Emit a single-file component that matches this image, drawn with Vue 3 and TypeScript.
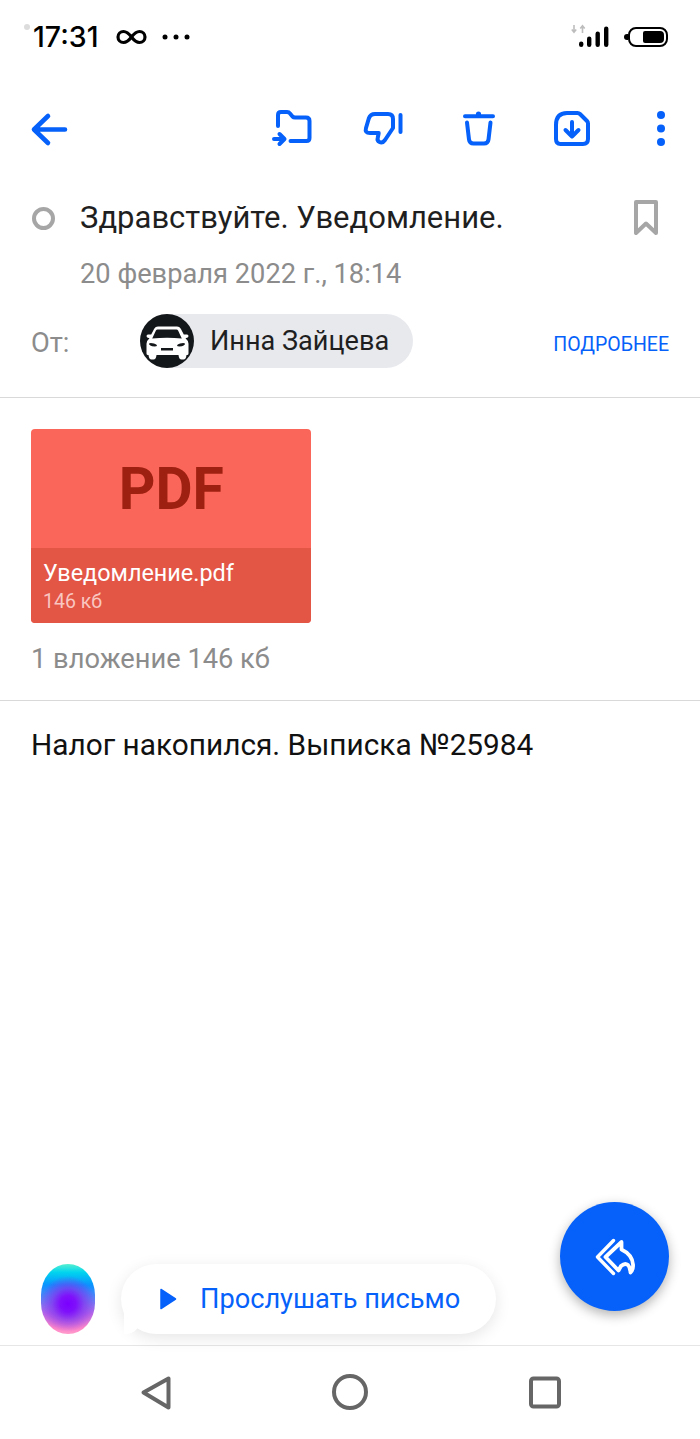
<script setup lang="ts">
const toolbarDots = [115, 128.5, 142]
const signalBars = [
  { x: 579, y: 41.5, h: 5.5 },
  { x: 587, y: 36.5, h: 10.5 },
  { x: 595.5, y: 31.5, h: 15.5 },
  { x: 604, y: 26.5, h: 20.5 },
]
</script>

<template>
  <div class="page">
    <div class="status-bar">
      <span class="status-led"></span>
      <span class="status-time">17:31</span>
      <svg class="status-inf" viewBox="114 27 36 20" width="36" height="20">
        <path d="M131.500 37c-3-4-5-5.500-8-5.500a5.500 5.500 0 0 0 0 11c3 0 5-1.500 8-5.500s5-5.500 8-5.500a5.500 5.500 0 0 1 0 11c-3 0-5-1.500-8-5.500z" fill="none" stroke="#000" stroke-width="3.200" />
      </svg>
      <svg class="status-more" viewBox="160 32 32 10" width="32" height="10">
        <circle cx="165" cy="37" r="2.500" />
        <circle cx="176" cy="37" r="2.500" />
        <circle cx="187" cy="37" r="2.500" />
      </svg>
      <svg class="status-signal" viewBox="570 22 42 28" width="42" height="28">
        <path d="M574 25v7M571.800 29.500l2.200 2.700 2.200-2.700M582.500 33v-7M580.300 28.500l2.200-2.700 2.200 2.700" fill="none" stroke="#bdbdbd" stroke-width="1.600" />
        <rect v-for="b in signalBars" :key="b.x" :x="b.x" :y="b.y" width="4.400" :height="b.h" rx="2.200" />
      </svg>
      <div class="battery">
        <span class="battery-fill"></span>
      </div>
    </div>

    <div class="toolbar">
      <svg class="ic back" viewBox="27 106 44 46" width="44" height="46">
        <path d="M65 129.500H34M48 116l-14 13.500L48 143" stroke-width="4.600" />
      </svg>
      <div class="toolbar-right">
        <svg class="ic" viewBox="266 106 46 46" width="46" height="46">
          <path d="M278 126v-11q0-3 3-3h6q2 0 3 1.500l2.500 3q1 1 2.500 1h11q3.500 0 3.500 3.500v17q0 3-3 3h-16" />
          <path d="M274 139h10M279.500 134l5 5-5 5" />
        </svg>
        <svg class="ic" viewBox="359 106 46 46" width="46" height="46">
          <path d="M375 114h13q5 0 5 5v9l-8 12q-2.500 3.500-5.500 2-2.500-1.200-1.800-4l1-5h-8.700q-5.500 0-4-5l2.800-9.500q1.500-4.500 6.200-4.500z" />
          <path d="M400.500 115v17" />
        </svg>
        <svg class="ic" viewBox="452 106 46 46" width="46" height="46">
          <path d="M465 116.300h28M467 122.500l2 17q.5 4 4.500 4h10.500q4 0 4.500-4l2-17" />
          <circle cx="478.500" cy="114" r="2.600" fill="#0561fa" stroke="none" />
        </svg>
        <svg class="ic" viewBox="545 106 46 46" width="46" height="46">
          <path d="M556 125q0-12 11-12h10.500q1.500 0 2.500 1l7 7q1 1 1 2.500v15.500q0 5-5 5h-22.500q-4.500 0-4.500-5z" />
          <path d="M572 122v14.500M565.500 130l6.500 6.500 6.500-6.500" />
        </svg>
        <svg class="ic" viewBox="638 106 46 46" width="46" height="46">
          <circle v-for="y in toolbarDots" :key="y" cx="661" :cy="y" r="4" fill="#0561fa" stroke="none" />
        </svg>
      </div>
    </div>

    <div class="mail-head">
      <div class="subject-row">
        <span class="unread-dot"></span>
        <span class="subject">Здравствуйте. Уведомление.</span>
        <svg class="bookmark" viewBox="0 0 26 38" width="26" height="38">
          <path d="M3 3h20v31l-10-9.500L3 34z" fill="none" stroke="#a6a6a6" stroke-width="4" stroke-linejoin="round" />
        </svg>
      </div>
      <div class="date">20 февраля 2022 г., 18:14</div>
      <div class="sender-row">
        <span class="from-label">От:</span>
        <div class="chip">
          <svg class="avatar" viewBox="0 0 54 54" width="54" height="54">
            <circle cx="27" cy="27" r="27" fill="#14171a" />
            <path fill-rule="evenodd" fill="#fff" d="M17 12.500h20q2.500 0 3.800 2.200l3 5.800h3.200q1.500 0 1.500 1.700t-3 2q3 2.500 3 5.500v9.800q0 1.500-1.500 1.500h-.5q-.5 4.500-3 4.500h-2q-2.500 0-3-4.500h-22q-.5 4.500-3 4.500h-2q-2.500 0-3-4.500h-.5q-1.500 0-1.500-1.500v-9.800q0-3 3-5.500-3-.3-3-2t1.500-1.700h3.200l3-5.800q1.300-2.200 3.800-2.200zM17.500 15.500q-1 0-1.600 1l-3.700 8q14.800-1.500 29.600 0l-3.700-8q-.6-1-1.600-1zM9 29.500q0 2.500 5.500 3 2.500 0 2.500-1t-3-2q-4-.8-5 0zM45 29.500q0 2.500-5.500 3-2.500 0-2.500-1t3-2q4-.8 5 0zM21 34v2.500h12v-2.500z" />
          </svg>
          <span class="chip-name">Инна Зайцева</span>
        </div>
        <span class="more-link">ПОДРОБНЕЕ</span>
      </div>
    </div>

    <div class="attachments">
      <div class="pdf-card">
        <div class="pdf-top"><span class="pdf-mark">PDF</span></div>
        <div class="pdf-bottom">
          <div class="pdf-name">Уведомление.pdf</div>
          <div class="pdf-size">146 кб</div>
        </div>
      </div>
      <div class="attach-total">1 вложение 146 кб</div>
    </div>

    <div class="mail-body">Налог накопился. Выписка №25984</div>

    <div class="assistant-row">
      <div class="orb"></div>
      <div class="listen-bubble">
        <svg class="play" viewBox="0 0 18 24" width="18" height="24">
          <path d="M2 2.500 16.500 12 2 21.500z" fill="#0561fa" stroke="#0561fa" stroke-width="1.500" stroke-linejoin="round" />
        </svg>
        <span>Прослушать письмо</span>
      </div>
      <button class="fab">
        <svg viewBox="590 1232 48 48" width="48" height="48">
          <path d="M612.500 1239.500 596.500 1256l16 16.500" fill="none" stroke="#fff" stroke-width="3.400" stroke-linecap="round" stroke-linejoin="round" />
          <path d="M620.500 1241 604.500 1256l13 13.500 2.500-4.500q4-3.500 7-1 2 2 2.500 7.500 3-3 2.500-8-.8-10-11.500-15z" fill="none" stroke="#fff" stroke-width="3.800" stroke-linejoin="round" />
        </svg>
      </button>
    </div>

    <div class="nav-bar">
      <svg viewBox="138 1372 36 40" width="36" height="40">
        <path d="M143.500 1392.500 168.500 1378.500v29z" fill="none" stroke="#666" stroke-width="4" stroke-linejoin="round" />
      </svg>
      <svg viewBox="330 1372 40 40" width="40" height="40">
        <circle cx="350" cy="1392" r="16" fill="none" stroke="#666" stroke-width="4" />
      </svg>
      <svg viewBox="525 1372 40 40" width="40" height="40">
        <rect x="531" y="1378.500" width="28" height="28" rx="2.500" fill="none" stroke="#666" stroke-width="4" />
      </svg>
    </div>
  </div>
</template>

<style>
body {
  margin: 0;
  background: #fff;
}
</style>

<style scoped>
.page {
  width: 700px;
  height: 1439px;
  display: flex;
  flex-direction: column;
  background: #fff;
  font-family: Roboto, "Noto Sans", sans-serif;
  overflow: hidden;
}
.status-bar {
  height: 72px;
  flex: none;
  display: flex;
  align-items: flex-start;
  position: relative;
  padding: 22px 32px 0 33px;
  box-sizing: border-box;
}
.status-led {
  position: absolute;
  left: 24px;
  top: 24px;
  width: 6px;
  height: 6px;
  border-radius: 50%;
  background: #dcdcdc;
}
.status-time {
  font-family: Inter, Roboto, sans-serif;
  font-size: 28.500px;
  font-weight: 500;
  line-height: 30px;
  color: #000;
  width: 81px;
}
.status-inf {
  margin-top: 5px;
}
.status-more {
  margin: 10px 0 0 10px;
}
.status-signal {
  margin: 0 16px 0 auto;
}
.battery {
  width: 40px;
  height: 20px;
  margin-top: 5px;
  border: 2px solid #000;
  border-radius: 8px;
  box-sizing: border-box;
  display: flex;
  justify-content: flex-end;
  align-items: center;
  padding-right: 2px;
  position: relative;
}
.battery::before {
  content: "";
  position: absolute;
  left: -6px;
  top: 5px;
  width: 4px;
  height: 6px;
  border-radius: 3px 0 0 3px;
  background: #000;
}
.battery-fill {
  width: 21px;
  height: 12px;
  border-radius: 2px 4px 4px 2px;
  background: #000;
}
.toolbar {
  flex: none;
  height: 46px;
  margin-top: 34px;
  padding: 0 16px 0 27px;
  display: flex;
  justify-content: space-between;
}
.toolbar-right {
  display: flex;
  gap: 47px;
}
.ic {
  fill: none;
  stroke: #0561fa;
  stroke-width: 4;
  stroke-linecap: round;
  stroke-linejoin: round;
}
.mail-head {
  flex: none;
  padding: 46px 0 29px;
  border-bottom: 1px solid #d9d9d9;
}
.subject-row {
  height: 40px;
  display: flex;
  align-items: center;
  padding: 0 41px 0 32px;
}
.unread-dot {
  width: 23px;
  height: 23px;
  box-sizing: border-box;
  border: 4px solid #a6a6a6;
  border-radius: 50%;
  margin-right: 25px;
}
.subject {
  font-size: 31px;
  line-height: 40px;
  color: #1f1f1f;
  flex: 1;
}
.date {
  margin-top: 18px;
  padding-left: 80px;
  font-size: 27.250px;
  line-height: 36px;
  color: #8c8c8c;
}
.sender-row {
  margin-top: 22px;
  height: 54px;
  display: flex;
  align-items: center;
  padding: 0 31px;
}
.from-label {
  width: 109px;
  margin-top: 3px;
  font-size: 27.250px;
  color: #8c8c8c;
}
.chip {
  height: 54px;
  width: 273px;
  display: flex;
  align-items: center;
  background: #e8e9ed;
  border-radius: 27px;
}
.avatar {
  flex: none;
}
.chip-name {
  margin-left: 16px;
  font-size: 27.100px;
  color: #1f1f1f;
}
.more-link {
  margin: 6px 0 0 auto;
  font-size: 19.500px;
  color: #0561fa;
}
.attachments {
  flex: none;
  padding: 31px 31px 23px;
  border-bottom: 1px solid #d9d9d9;
}
.pdf-card {
  width: 280px;
  height: 194px;
  border-radius: 4px;
  overflow: hidden;
  background: #fb665a;
  display: flex;
  flex-direction: column;
}
.pdf-top {
  height: 119px;
  flex: none;
  text-align: center;
  font-size: 60px;
  font-weight: 700;
  line-height: 120px;
  color: #9e2010;
}
.pdf-mark {
  display: inline-block;
  transform: scaleX(0.95);
}
.pdf-bottom {
  flex: 1;
  background: #e35646;
  padding: 9px 12px 0;
}
.pdf-name {
  font-size: 23.400px;
  line-height: 32px;
  color: #fff;
}
.pdf-size {
  font-size: 19.500px;
  line-height: 26px;
  color: #f9c6c0;
}
.attach-total {
  margin-top: 18px;
  font-size: 27.250px;
  line-height: 36px;
  color: #8c8c8c;
}
.mail-body {
  flex: 1;
  padding: 24px 31px 0;
  font-size: 29.800px;
  line-height: 40px;
  color: #111;
}
.assistant-row {
  flex: none;
  display: flex;
  align-items: flex-end;
  padding: 0 31px 11px 41px;
}
.orb {
  width: 54px;
  height: 70px;
  margin-right: 26px;
  border-radius: 27px / 31px;
  background:
    radial-gradient(circle at 50% 57%, #7a00ff 0, #7f10fb 8px, rgba(130, 50, 240, 0.7) 16px, rgba(130, 80, 240, 0) 28px),
    linear-gradient(180deg, #56f0d0 0, #00d4ee 12%, #0a92ff 30%, #5e82f5 50%, #b86ae8 70%, #ff86c8 92%, #ff9ccc 100%);
}
.listen-bubble {
  width: 375px;
  height: 70px;
  box-sizing: border-box;
  display: flex;
  align-items: center;
  padding-left: 38px;
  background: #fff;
  border-radius: 35px;
  box-shadow: 0 4px 16px rgba(0, 0, 0, 0.1);
  position: relative;
  font-size: 27.200px;
  color: #0561fa;
}
.listen-bubble::before {
  content: "";
  position: absolute;
  left: 3px;
  bottom: 0;
  width: 16px;
  height: 24px;
  background: #fff;
  border-radius: 0 0 14px 2px;
}
.play {
  margin-right: 23px;
}
.fab {
  width: 109px;
  height: 109px;
  padding: 0;
  border: 0;
  margin: 0 0 23px auto;
  border-radius: 50%;
  background: #0561fa;
  box-shadow: 0 4px 12px rgba(0, 0, 0, 0.3);
  display: flex;
  align-items: center;
  justify-content: center;
}
.nav-bar {
  flex: none;
  height: 94px;
  box-sizing: border-box;
  border-top: 1px solid #e6e6e6;
  display: flex;
  align-items: flex-start;
  padding: 26px 135px 0 138px;
  justify-content: space-between;
}
</style>
